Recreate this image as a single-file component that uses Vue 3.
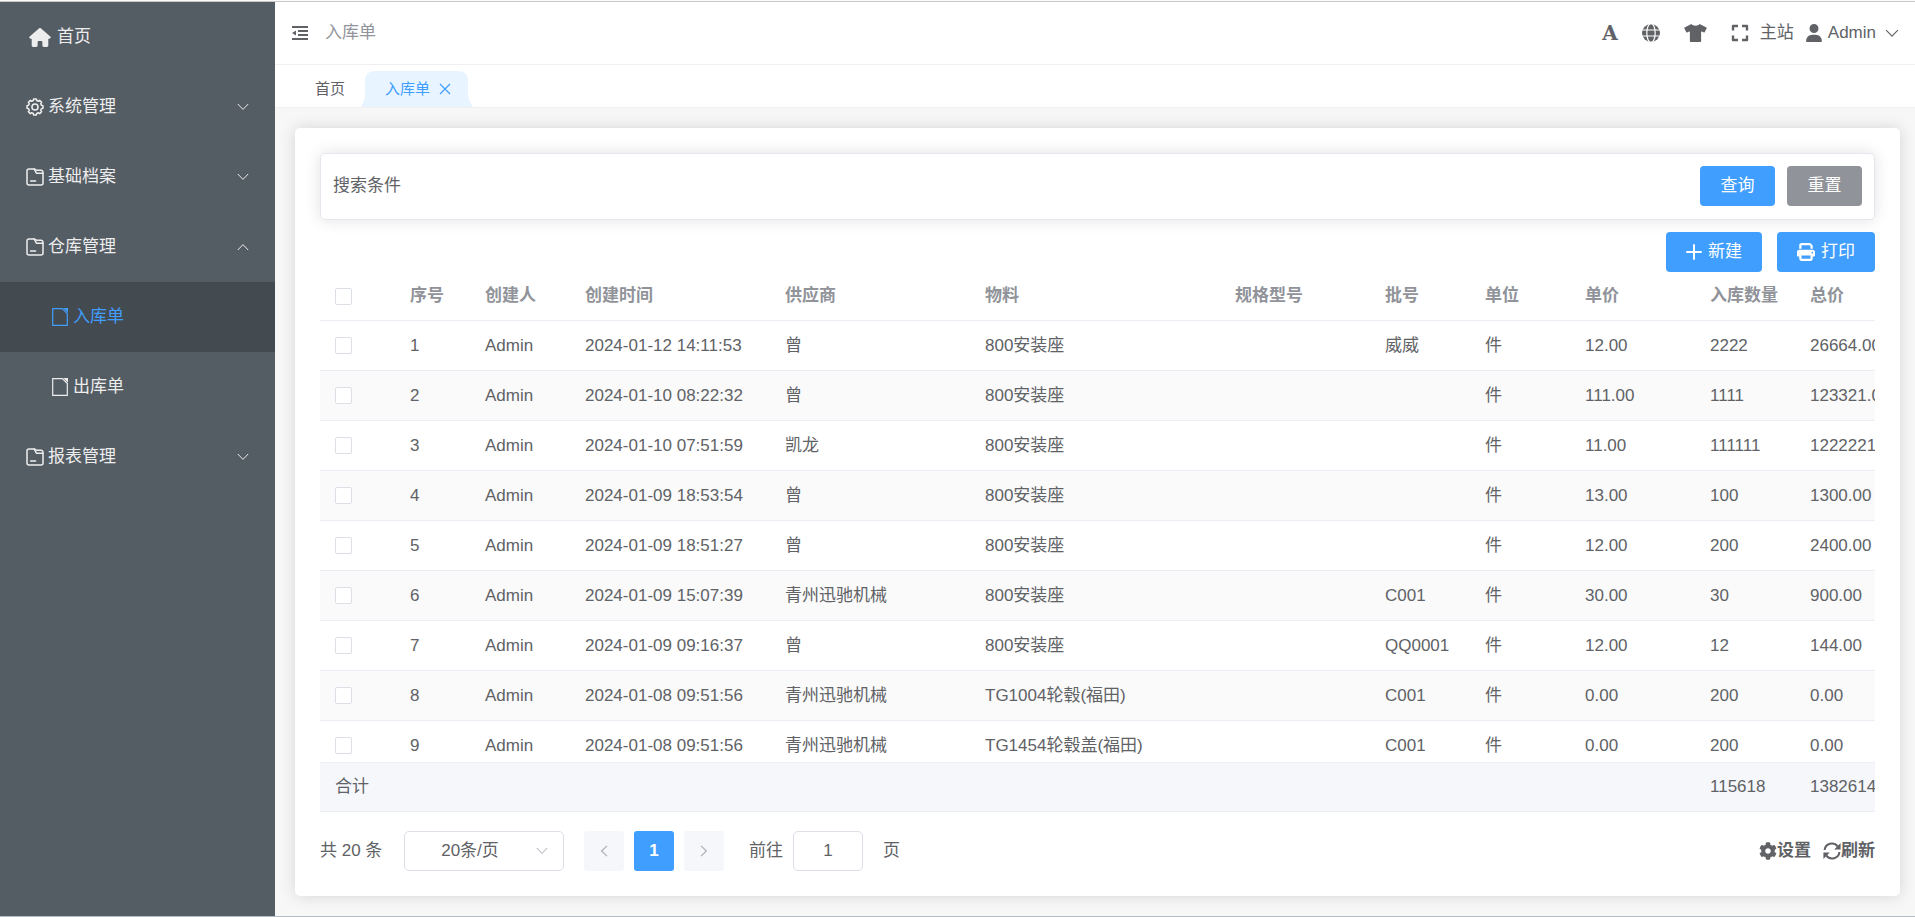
<script setup>
import { ref } from 'vue'

const menus = [
  { label: '系统管理', icon: 'i-setting' },
  { label: '基础档案', icon: 'i-folder' },
  { label: '仓库管理', icon: 'i-folder', open: true, children: ['入库单', '出库单'] },
  { label: '报表管理', icon: 'i-folder' },
]
const activePage = ref('入库单')

const tools = [
  { label: '语言', icon: 'i-globe', size: 'w18' },
  { label: '主题', icon: 'i-shirt', size: 'w23' },
  { label: '全屏', icon: 'i-expand', size: 'w18' },
]

const columns = [
  { key: 'no', label: '序号', cls: 'c75' },
  { key: 'creator', label: '创建人', cls: 'c100' },
  { key: 'time', label: '创建时间', cls: 'c200' },
  { key: 'supplier', label: '供应商', cls: 'c200' },
  { key: 'material', label: '物料', cls: 'c250' },
  { key: 'spec', label: '规格型号', cls: 'c150' },
  { key: 'batch', label: '批号', cls: 'c100' },
  { key: 'unit', label: '单位', cls: 'c100' },
  { key: 'price', label: '单价', cls: 'c125' },
  { key: 'qty', label: '入库数量', cls: 'c100' },
  { key: 'total', label: '总价', cls: 'c150' },
]

const row = (no, time, supplier, material, batch, price, qty, total) => ({
  no, creator: 'Admin', time, supplier, material, spec: '', batch, unit: '件', price, qty, total,
})
const rows = [
  row(1, '2024-01-12 14:11:53', '曾', '800安装座', '威威', '12.00', '2222', '26664.00'),
  row(2, '2024-01-10 08:22:32', '曾', '800安装座', '', '111.00', '1111', '123321.00'),
  row(3, '2024-01-10 07:51:59', '凯龙', '800安装座', '', '11.00', '111111', '1222221.00'),
  row(4, '2024-01-09 18:53:54', '曾', '800安装座', '', '13.00', '100', '1300.00'),
  row(5, '2024-01-09 18:51:27', '曾', '800安装座', '', '12.00', '200', '2400.00'),
  row(6, '2024-01-09 15:07:39', '青州迅驰机械', '800安装座', 'C001', '30.00', '30', '900.00'),
  row(7, '2024-01-09 09:16:37', '曾', '800安装座', 'QQ0001', '12.00', '12', '144.00'),
  row(8, '2024-01-08 09:51:56', '青州迅驰机械', 'TG1004轮毂(福田)', 'C001', '0.00', '200', '0.00'),
  row(9, '2024-01-08 09:51:56', '青州迅驰机械', 'TG1454轮毂盖(福田)', 'C001', '0.00', '200', '0.00'),
]
const sums = { qty: '115618', total: '1382614.00' }

const pageSize = ref('20')
const jump = ref('1')

// Outline of an eight-toothed gear centred in a 20 x 20 box
const gearOutline = (() => {
  const pts = []
  for (let i = 0; i < 8; i++) {
    const mid = (i * Math.PI) / 4
    for (const [offset, r] of [[-0.26, 7.4], [-0.17, 9], [0.17, 9], [0.26, 7.4]]) {
      pts.push(`${(10 + r * Math.cos(mid + offset)).toFixed(2)} ${(10 + r * Math.sin(mid + offset)).toFixed(2)}`)
    }
  }
  return `M${pts.join('L')}Z`
})()
</script>

<template>
  <div class="app">
    <svg class="sprite" aria-hidden="true">
      <symbol id="i-home" viewBox="0 0 576 512"><path d="M575.8 255.5c0 18-15 32.1-32 32.1h-32l.7 160.2c0 2.7-.2 5.4-.5 8.1V472c0 22.1-17.9 40-40 40H392c-22.1 0-40-17.9-40-40V384c0-17.7-14.3-32-32-32H256c-17.7 0-32 14.3-32 32v88c0 22.1-17.9 40-40 40H104c-22.1 0-40-17.9-40-40V287.6H32c-18 0-32-14-32-32.1 0-9 3-17 10-24L266.4 8c7-7 15-8 22-8s15 2 21 7L564.8 231.5c8 7 12 15 11 24z" /></symbol>
      <symbol id="i-setting" viewBox="0 0 20 20"><g fill="none" stroke="currentColor" stroke-width="1.7" stroke-linejoin="round"><path :d="gearOutline" /><circle cx="10" cy="10" r="3.4" /></g></symbol>
      <symbol id="i-folder" viewBox="0 0 18 18"><g fill="none" stroke="currentColor" stroke-width="1.5" stroke-linejoin="round" stroke-linecap="round"><path d="M3 1h5.200l2.400 1.200h4.400a2 2 0 0 1 2 2v10.800a2 2 0 0 1-2 2H3a2 2 0 0 1-2-2V3a2 2 0 0 1 2-2z" /><path d="M8.200 1l2.200 4.200h6.400M4.600 13h5" /></g></symbol>
      <symbol id="i-doc" viewBox="0 0 16 18"><path d="M10.400.7H.7v16.600h14.600V5.600z" fill="none" stroke="currentColor" stroke-width="1.2" /><path d="M11.200 0H16v4.800z" /></symbol>
      <symbol id="i-down" viewBox="0 0 12 8"><path d="M.8 1l5.2 5.4L11.2 1" fill="none" stroke="currentColor" stroke-width="1" /></symbol>
      <symbol id="i-up" viewBox="0 0 12 8"><path d="M.8 7L6 1.6 11.2 7" fill="none" stroke="currentColor" stroke-width="1" /></symbol>
      <symbol id="i-left" viewBox="0 0 8 12"><path d="M7 .8L1.6 6 7 11.2" fill="none" stroke="currentColor" stroke-width="1.1" /></symbol>
      <symbol id="i-right" viewBox="0 0 8 12"><path d="M1 .8L6.4 6 1 11.2" fill="none" stroke="currentColor" stroke-width="1.1" /></symbol>
      <symbol id="i-close" viewBox="0 0 12 12"><path d="M1 1l10 10M11 1L1 11" fill="none" stroke="currentColor" stroke-width="1.2" /></symbol>
      <symbol id="i-outdent" viewBox="0 0 16 14"><path d="M0 0h16v2H0zM6 4h10v2H6zM6 8h10v2H6zM0 12h16v2H0zM0 7l4-2.6v5.2z" /></symbol>
      <symbol id="i-globe" viewBox="0 0 18 18"><circle cx="9" cy="9" r="9" /><g fill="none" stroke="#fff" stroke-width="1.2"><ellipse cx="9" cy="9" rx="4.2" ry="9.4" /><path d="M0 6h18M0 12h18" /></g></symbol>
      <symbol id="i-shirt" viewBox="0 0 640 512"><path d="M631.2 96.5L436.5 0C416.4 27.8 371.9 47.2 320 47.2S223.6 27.8 203.5 0L8.8 96.5c-7.9 4-11.1 13.6-7.2 21.5l57.2 114.5c4 7.9 13.6 11.1 21.5 7.2l56.6-27.7c10.6-5.2 23 2.5 23 14.4V480c0 17.7 14.3 32 32 32h256c17.7 0 32-14.3 32-32V226.3c0-11.8 12.4-19.6 23-14.4l56.6 27.7c7.9 4 17.5.8 21.5-7.2L638.3 118c4-7.9.8-17.6-7.1-21.5z" /></symbol>
      <symbol id="i-expand" viewBox="0 0 18 18"><path d="M2 6.500V2h5M11 2h5v4.500M16 11.500V16h-5M7 16H2v-4.500" fill="none" stroke="currentColor" stroke-width="2.4" stroke-linejoin="round" /></symbol>
      <symbol id="i-user" viewBox="0 0 448 512"><path d="M224 256A128 128 0 1 0 224 0a128 128 0 1 0 0 256zm-45.7 48C79.800 304 0 383.800 0 482.300 0 498.700 13.300 512 29.700 512h388.600c16.400 0 29.700-13.300 29.700-29.700C448 383.800 368.200 304 269.700 304z" /></symbol>
      <symbol id="i-plus" viewBox="0 0 16 16"><path d="M8 1v14M1 8h14" fill="none" stroke="currentColor" stroke-width="2" stroke-linecap="round" /></symbol>
      <symbol id="i-print" viewBox="0 0 512 512"><path d="M128 0C92.700 0 64 28.700 64 64v96h64V64h226.700L384 93.300V160h64V93.300c0-17-6.700-33.300-18.700-45.300L400 18.700C388 6.700 371.700 0 354.700 0H128zM384 352v96H128v-96h256zm64 32h32c17.700 0 32-14.300 32-32v-96c0-35.300-28.700-64-64-64H64c-35.300 0-64 28.700-64 64v96c0 17.700 14.300 32 32 32h32v64c0 35.300 28.700 64 64 64h256c35.300 0 64-28.700 64-64v-64zM432 248a24 24 0 1 1 0 48 24 24 0 1 1 0-48z" /></symbol>
      <symbol id="i-cog" viewBox="0 0 512 512"><path d="M487.400 315.700l-42.600-24.600c4.300-23.200 4.300-47 0-70.200l42.600-24.600c4.900-2.800 7.100-8.600 5.500-14-11.100-35.600-30-67.800-54.700-94.600-3.800-4.100-10-5.100-14.800-2.300L380.800 110c-17.900-15.400-38.500-27.300-60.800-35.100V25.800c0-5.600-3.900-10.500-9.400-11.700-36.700-8.200-74.300-7.800-109.200 0-5.500 1.200-9.400 6.100-9.400 11.700V75c-22.200 7.900-42.800 19.800-60.800 35.100L88.700 85.500c-4.900-2.800-11-1.900-14.800 2.300-24.700 26.700-43.600 58.900-54.700 94.600-1.700 5.400.6 11.200 5.500 14L67.300 221c-4.300 23.200-4.300 47 0 70.200l-42.600 24.600c-4.900 2.800-7.100 8.600-5.500 14 11.100 35.600 30 67.800 54.700 94.600 3.800 4.100 10 5.100 14.800 2.300l42.600-24.600c17.900 15.400 38.500 27.300 60.800 35.100v49.200c0 5.600 3.900 10.500 9.400 11.700 36.700 8.200 74.300 7.800 109.200 0 5.500-1.200 9.400-6.100 9.400-11.700v-49.200c22.200-7.900 42.800-19.800 60.800-35.100l42.600 24.600c4.900 2.800 11 1.900 14.800-2.300 24.700-26.700 43.600-58.900 54.700-94.600 1.500-5.500-.7-11.300-5.600-14.100zM256 336c-44.100 0-80-35.900-80-80s35.900-80 80-80 80 35.900 80 80-35.900 80-80 80z" /></symbol>
      <symbol id="i-refresh" viewBox="0 0 18 18"><g fill="none" stroke="currentColor" stroke-width="2.1"><path d="M1.600 8A7.300 7.300 0 0 1 14.600 4.300M16.400 10A7.300 7.300 0 0 1 3.400 13.700" /></g><path d="M17.600 1v6.400h-6.400zM.4 17v-6.400h6.400z" /></symbol>
    </svg>

    <div class="shell">
      <nav class="sidebar">
        <a href="#" class="item home"><svg><use href="#i-home" /></svg>首页</a>
        <template v-for="m in menus" :key="m.label">
          <button type="button" class="item" :aria-expanded="!!m.open">
            <svg class="w18"><use :href="'#' + m.icon" /></svg>
            <span>{{ m.label }}</span>
            <svg class="arrow"><use :href="m.open ? '#i-up' : '#i-down'" /></svg>
          </button>
          <a
            v-for="c in m.children || []"
            :key="c"
            href="#"
            class="item sub"
            :class="{ active: c === activePage }"
            @click.prevent="activePage = c"
          ><svg><use href="#i-doc" /></svg>{{ c }}</a>
        </template>
      </nav>

      <div class="main">
        <header class="topbar">
          <button type="button" class="plain fold" aria-label="折叠菜单"><svg><use href="#i-outdent" /></svg></button>
          <span class="crumb">入库单</span>
          <div class="tools">
            <button type="button" class="plain tool letter" aria-label="字号">A</button>
            <button v-for="t in tools" :key="t.icon" type="button" class="plain tool" :aria-label="t.label">
              <svg :class="t.size"><use :href="'#' + t.icon" /></svg>
            </button>
            <a href="#" class="site">主站</a>
            <button type="button" class="plain account">
              <svg class="w18"><use href="#i-user" /></svg>Admin<svg class="caret"><use href="#i-down" /></svg>
            </button>
          </div>
        </header>

        <div class="tabs">
          <a href="#" class="tab">首页</a>
          <div class="tab current">
            <svg class="tab-bg" viewBox="0 0 112 36" preserveAspectRatio="none" aria-hidden="true"><path d="M0 36C3 31 4 28 4 22V10Q4 0 14 0H97Q107 0 107 10V22C107 28 109 31 112 36Z" /></svg>
            <a href="#">入库单</a>
            <button type="button" class="plain" aria-label="关闭"><svg><use href="#i-close" /></svg></button>
          </div>
        </div>

        <main class="content">
          <section class="card">
            <div class="search">
              <span>搜索条件</span>
              <button type="button" class="btn">查询</button>
              <button type="button" class="btn grey">重置</button>
            </div>

            <div class="actions">
              <button type="button" class="btn"><svg class="w16"><use href="#i-plus" /></svg>新建</button>
              <button type="button" class="btn"><svg class="w18"><use href="#i-print" /></svg>打印</button>
            </div>

            <div class="table-wrap">
              <table>
                <colgroup>
                  <col class="c75" />
                  <col v-for="c in columns" :key="c.key" :class="c.cls" />
                </colgroup>
                <thead>
                  <tr>
                    <th><input type="checkbox" aria-label="全选" /></th>
                    <th v-for="c in columns" :key="c.key">{{ c.label }}</th>
                  </tr>
                </thead>
                <tbody>
                  <tr v-for="r in rows" :key="r.no">
                    <td><input type="checkbox" :aria-label="'选择 ' + r.no" /></td>
                    <td v-for="c in columns" :key="c.key">{{ r[c.key] }}</td>
                  </tr>
                </tbody>
                <tfoot>
                  <tr>
                    <td>合计</td>
                    <td v-for="c in columns" :key="c.key">{{ sums[c.key] }}</td>
                  </tr>
                </tfoot>
              </table>
            </div>

            <footer class="pager">
              <span class="count">共 20 条</span>
              <span class="size">
                <select v-model="pageSize" aria-label="每页条数">
                  <option value="20">20条/页</option>
                  <option value="50">50条/页</option>
                </select>
                <svg><use href="#i-down" /></svg>
              </span>
              <button type="button" class="page" disabled aria-label="上一页"><svg><use href="#i-left" /></svg></button>
              <button type="button" class="page on">1</button>
              <button type="button" class="page" disabled aria-label="下一页"><svg><use href="#i-right" /></svg></button>
              <label class="jump">前往<input v-model="jump" type="text" />页</label>
              <div class="links">
                <button type="button" class="plain"><svg class="w18"><use href="#i-cog" /></svg>设置</button>
                <button type="button" class="plain"><svg class="w18"><use href="#i-refresh" /></svg>刷新</button>
              </div>
            </footer>
          </section>
        </main>
      </div>
    </div>
  </div>
</template>

<style>
body {
  margin: 0;
  overflow: hidden;
}
</style>

<style scoped>
.app {
  box-sizing: border-box;
  height: 100vh;
  padding-top: 1px;
  border-bottom: 1px solid #b4bcc6;
  background: #fafafa;
  color: #606266;
  font: 17px/24px "Liberation Sans", Arial, "Noto Sans CJK SC", sans-serif;
}
.app *,
.app *::before {
  box-sizing: border-box;
}
.sprite {
  position: absolute;
  width: 0;
  height: 0;
}
svg {
  display: block;
  flex: none;
  fill: currentColor;
}
.w16 {
  width: 16px;
  height: 16px;
}
.w18 {
  width: 18px;
  height: 18px;
}
.w23 {
  width: 23px;
  height: 18px;
}
a {
  color: inherit;
  text-decoration: none;
}
button,
input,
select {
  margin: 0;
  font: inherit;
  color: inherit;
}
.plain {
  display: flex;
  align-items: center;
  padding: 0;
  border: 0;
  background: none;
  cursor: pointer;
}

.shell {
  display: flex;
  height: 100%;
  border-top: 1px solid #c8c8c8;
}

/* Side menu */
.sidebar {
  flex: none;
  width: 275px;
  background: #545c64;
  color: #ededed;
}
.item {
  display: flex;
  align-items: center;
  gap: 4px;
  width: 100%;
  height: 70px;
  padding: 0 26px;
  border: 0;
  background: none;
  text-align: left;
  cursor: pointer;
}
.home {
  gap: 6px;
  padding-left: 29px;
}
.home svg {
  width: 22px;
  height: 19px;
}
.item .arrow {
  width: 12px;
  height: 8px;
  margin-left: auto;
}
.sub {
  gap: 5px;
  padding-left: 52px;
}
.sub svg {
  width: 16px;
  height: 18px;
}
.sub.active {
  background: #434a50;
  color: #409eff;
}

/* Top bar */
.main {
  display: flex;
  flex: 1;
  flex-direction: column;
  min-width: 0;
  background: #f7f7f7;
}
.topbar {
  display: flex;
  flex: none;
  align-items: center;
  height: 63px;
  padding: 0 16px 0 17px;
  border-bottom: 1px solid #f0f0f0;
  background: #fff;
}
.fold svg {
  width: 16px;
  height: 14px;
}
.crumb {
  margin-left: 17px;
  color: #909399;
}
.tools {
  display: flex;
  align-items: center;
  margin-left: auto;
}
.tool {
  margin-right: 24px;
}
.tool:nth-child(4) {
  margin-right: 11px;
}
.letter {
  font: bold 20px/24px "DejaVu Serif", serif;
}
.site {
  margin-right: 11px;
}
.account {
  gap: 5px;
}
.account .caret {
  width: 14px;
  height: 9px;
  margin-left: 4px;
}

/* Page tabs */
.tabs {
  display: flex;
  flex: none;
  align-items: flex-end;
  height: 43px;
  padding-left: 20px;
  border-bottom: 1px solid #f0f0f0;
  background: #fff;
  font-size: 15px;
}
.tab {
  display: flex;
  align-items: center;
  height: 36px;
  padding: 0 20px;
}
.current {
  position: relative;
  gap: 9px;
  margin-left: -4px;
  padding: 0 22px 0 24px;
  color: #409eff;
}
.current > * {
  position: relative;
}
.current .tab-bg {
  position: absolute;
  inset: 0;
  width: 100%;
  height: 100%;
  fill: #e8f4ff;
}
.current button svg {
  width: 12px;
  height: 12px;
}

/* Content card */
.content {
  display: flex;
  flex: 1;
  min-height: 0;
  padding: 20px 15px 20px 20px;
}
.card {
  display: flex;
  flex: 1;
  flex-direction: column;
  min-width: 0;
  padding: 25px;
  border-radius: 5px;
  background: #fff;
  box-shadow: 0 0 16px rgba(0, 0, 0, 0.14);
}
.search {
  display: flex;
  flex: none;
  align-items: flex-start;
  gap: 12px;
  height: 67px;
  padding: 12px;
  border: 1px solid #e4e7ed;
  border-radius: 5px;
  box-shadow: 0 0 16px rgba(0, 0, 0, 0.12);
}
.search span {
  margin-right: auto;
  line-height: 40px;
}
.btn {
  display: flex;
  align-items: center;
  justify-content: center;
  gap: 6px;
  min-width: 75px;
  height: 40px;
  padding: 0 20px;
  border: 0;
  border-radius: 4px;
  background: #409eff;
  color: #fff;
  cursor: pointer;
}
.grey {
  background: #909399;
}
.actions {
  display: flex;
  flex: none;
  justify-content: flex-end;
  gap: 15px;
  margin-top: 12px;
}

/* Data table */
.table-wrap {
  flex: 1;
  min-height: 0;
  overflow: hidden;
}
table {
  width: 1625px;
  table-layout: fixed;
  border-collapse: separate;
  border-spacing: 0;
}
.c75 {
  width: 75px;
}
.c100 {
  width: 100px;
}
.c125 {
  width: 125px;
}
.c150 {
  width: 150px;
}
.c200 {
  width: 200px;
}
.c250 {
  width: 250px;
}
th,
td {
  height: 50px;
  padding: 0 15px;
  border-bottom: 1px solid #ebeef5;
  text-align: left;
  white-space: nowrap;
}
th {
  height: 49px;
  color: #909399;
}
tbody tr:nth-child(even) {
  background: #fafafa;
}
tfoot td {
  position: sticky;
  bottom: 0;
  border-top: 1px solid #ebeef5;
  background: #f5f7fa;
}
input[type="checkbox"] {
  display: block;
  width: 17px;
  height: 17px;
  border: 1px solid #dcdfe6;
  border-radius: 2px;
  background: #fff;
  appearance: none;
}
input[type="checkbox"]:checked {
  border-color: #409eff;
  background: #409eff;
}

/* Pagination */
.pager {
  display: flex;
  flex: none;
  align-items: center;
  height: 40px;
  margin-top: 19px;
}
.count {
  min-width: 64px;
}
.size {
  position: relative;
  margin: 0 20px;
}
.size select {
  display: block;
  width: 160px;
  height: 40px;
  padding: 0 28px 0 0;
  border: 1px solid #dcdfe6;
  border-radius: 5px;
  background: #fff;
  appearance: none;
  text-align: center;
  text-align-last: center;
}
.size svg {
  position: absolute;
  top: 16px;
  right: 16px;
  width: 12px;
  height: 8px;
  color: #a8abb2;
  pointer-events: none;
}
.page {
  display: flex;
  align-items: center;
  justify-content: center;
  width: 40px;
  height: 40px;
  margin-right: 10px;
  padding: 0;
  border: 0;
  border-radius: 3px;
  background: #f5f7fa;
  color: #a8abb2;
}
.page svg {
  width: 8px;
  height: 12px;
}
.page.on {
  background: #409eff;
  color: #fff;
  font-weight: bold;
}
.jump {
  display: flex;
  align-items: center;
  margin-left: 15px;
}
.jump input {
  width: 70px;
  height: 40px;
  margin: 0 20px 0 10px;
  padding: 0;
  border: 1px solid #dcdfe6;
  border-radius: 5px;
  text-align: center;
}
.links {
  display: flex;
  gap: 12px;
  margin-left: auto;
  font-weight: bold;
}
</style>
